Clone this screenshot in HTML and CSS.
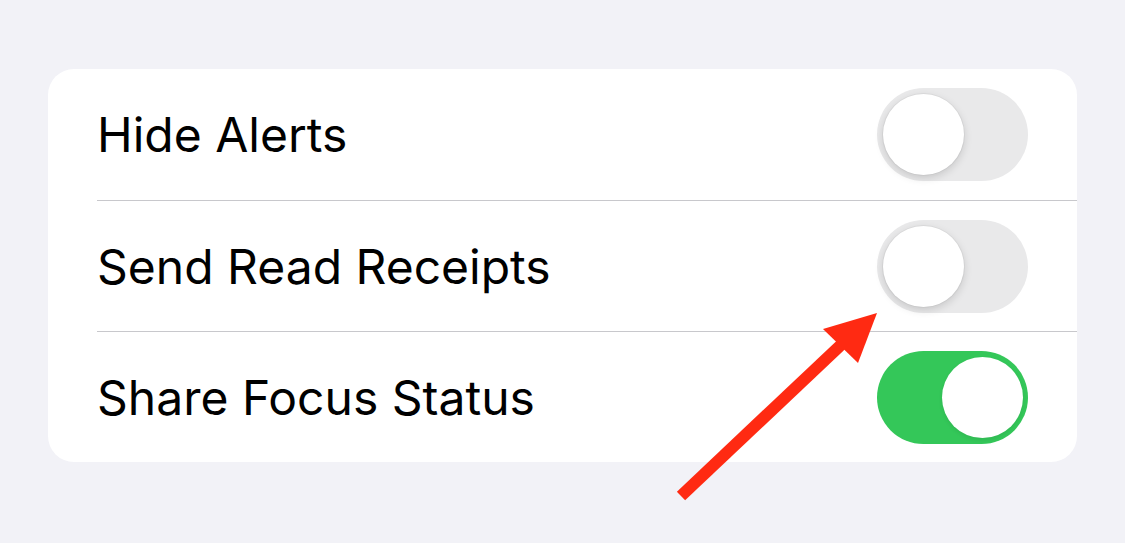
FILE: index.html
```html
<!DOCTYPE html>
<html lang="en">
<head>
    <meta charset="UTF-8">
    <title>Focus Settings</title>
    <link rel="stylesheet" href="styles.css">
</head>
<body>
    <div class="settings-card">
        <div class="setting-row">
            <div class="setting-inner">
                <span class="setting-label">Hide Alerts</span>
                <span class="toggle"><span class="knob"></span></span>
            </div>
        </div>
        <div class="setting-row">
            <div class="setting-inner">
                <span class="setting-label">Send Read Receipts</span>
                <span class="toggle"><span class="knob"></span></span>
            </div>
        </div>
        <div class="setting-row">
            <div class="setting-inner">
                <span class="setting-label">Share Focus Status</span>
                <span class="toggle toggle-on"><span class="knob"></span></span>
            </div>
        </div>
    </div>

    <!-- annotation arrow -->
    <svg class="arrow" width="1125" height="543" viewBox="0 0 1125 543">
        <line x1="681" y1="496" x2="843" y2="343" stroke="#ff2a12" stroke-width="12"/>
        <polygon points="877,313 823,329 858,363" fill="#ff2a12"/>
    </svg>
</body>
</html>
```

FILE: styles.css
```css
body {
    margin: 0;
    padding: 69px 48px 0 48px;
    background: #f2f2f7;
    font-family: Inter, "Noto Sans", sans-serif;
    width: 1029px;
    height: 474px;
    overflow: hidden;
}

.settings-card {
    background: #fff;
    border-radius: 26px;
    overflow: hidden;
}

.setting-row {
    padding-left: 49px;
}

.setting-inner {
    display: flex;
    justify-content: space-between;
    align-items: center;
    height: 130px;
    padding-right: 49px;
    border-bottom: 1px solid #c8c8cc;
}

.setting-row:first-child .setting-inner {
    height: 131px;
}

.setting-row:last-child .setting-inner {
    border-bottom: none;
}

.setting-label {
    font-size: 48px;
    color: #000;
    letter-spacing: 0;
}

.toggle {
    display: flex;
    align-items: center;
    width: 151px;
    height: 93px;
    padding: 0 6px;
    box-sizing: border-box;
    border-radius: 47px;
    background: #e9e9ea;
}

.knob {
    width: 81px;
    height: 81px;
    border-radius: 50%;
    background: #fff;
    box-shadow: 0 3px 8px rgba(0,0,0,0.15), 0 0 0 1px rgba(0,0,0,0.04);
}

.toggle-on {
    background: #34c759;
    justify-content: flex-end;
    padding: 0 5px;
}

.toggle-on .knob {
    box-shadow: 0 2px 4px rgba(0,0,0,0.08);
}

.arrow {
    position: absolute;
    left: 0;
    top: 0;
    pointer-events: none;
}
```
